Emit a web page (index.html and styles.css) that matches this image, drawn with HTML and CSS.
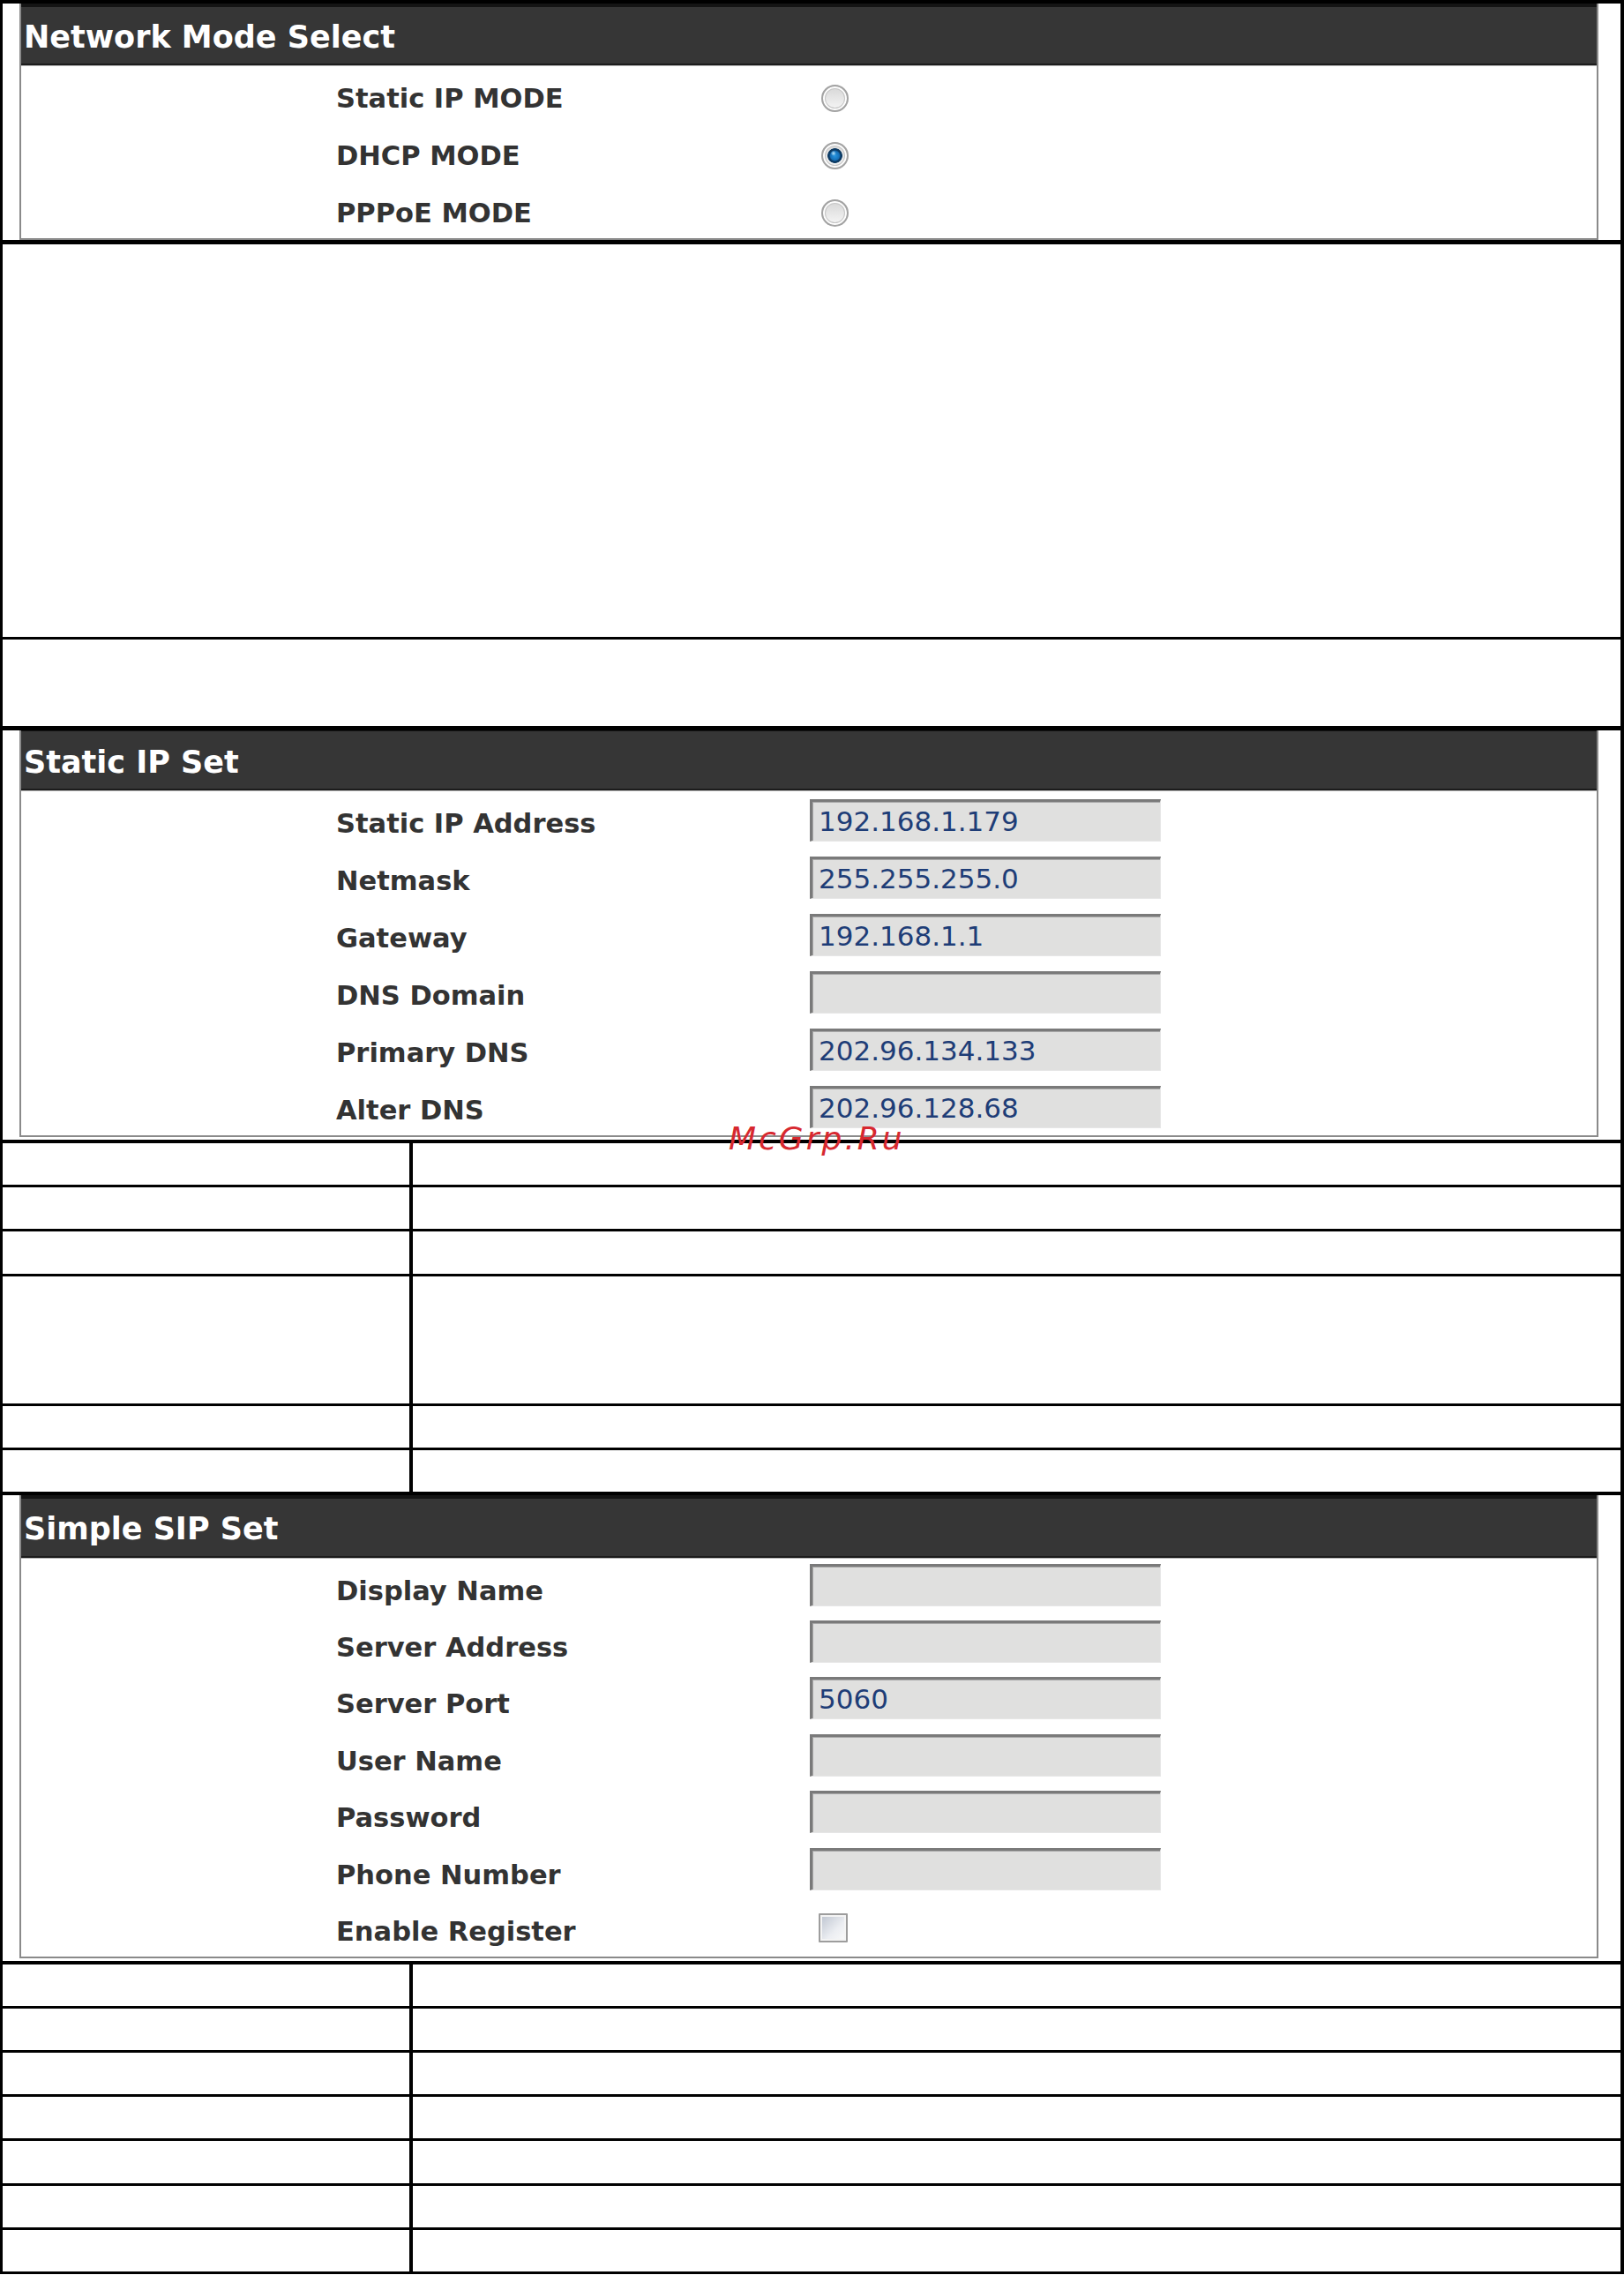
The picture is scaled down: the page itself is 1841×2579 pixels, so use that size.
FILE: index.html
```html
<!DOCTYPE html>
<html lang="en">

<head>
    <meta charset="UTF-8">
    <title>Network Settings</title>
    <link rel="stylesheet" href="styles.css">
</head>

<body>
    <div class="doc">
        <!-- network mode screenshot -->
        <div class="cell cell-mode">
            <div class="panel">
                <div class="panel-head head-thick">Network Mode Select</div>
                <div class="panel-body">
                    <div class="row">
                        <label class="label" for="modeStatic">Static IP MODE</label>
                        <input type="radio" class="radio" name="mode" id="modeStatic">
                    </div>
                    <div class="row">
                        <label class="label" for="modeDhcp">DHCP MODE</label>
                        <input type="radio" class="radio" name="mode" id="modeDhcp" checked>
                    </div>
                    <div class="row">
                        <label class="label" for="modePppoe">PPPoE MODE</label>
                        <input type="radio" class="radio" name="mode" id="modePppoe">
                    </div>
                </div>
            </div>
        </div>
        <div class="cell gap-big"></div>
        <div class="cell gap-small"></div>

        <!-- static ip screenshot -->
        <div class="cell cell-static">
            <div class="panel">
                <div class="panel-head head-thin">Static IP Set</div>
                <div class="panel-body">
                    <div class="row">
                        <label class="label">Static IP Address</label>
                        <input type="text" class="field" value="192.168.1.179">
                    </div>
                    <div class="row">
                        <label class="label">Netmask</label>
                        <input type="text" class="field" value="255.255.255.0">
                    </div>
                    <div class="row">
                        <label class="label">Gateway</label>
                        <input type="text" class="field" value="192.168.1.1">
                    </div>
                    <div class="row">
                        <label class="label">DNS Domain</label>
                        <input type="text" class="field" value="">
                    </div>
                    <div class="row">
                        <label class="label">Primary DNS</label>
                        <input type="text" class="field" value="202.96.134.133">
                    </div>
                    <div class="row">
                        <label class="label">Alter DNS</label>
                        <input type="text" class="field" value="202.96.128.68">
                    </div>
                </div>
            </div>
        </div>

        <div class="split">
            <div class="split-row"><div class="key"></div><div class="desc"></div></div>
            <div class="split-row"><div class="key"></div><div class="desc"></div></div>
            <div class="split-row"><div class="key"></div><div class="desc"></div></div>
            <div class="split-row tall"><div class="key"></div><div class="desc"></div></div>
            <div class="split-row"><div class="key"></div><div class="desc"></div></div>
            <div class="split-row end"><div class="key"></div><div class="desc"></div></div>
        </div>

        <!-- sip screenshot -->
        <div class="cell cell-sip">
            <div class="panel sip">
                <div class="panel-head head-thick">Simple SIP Set</div>
                <div class="panel-body">
                    <div class="row">
                        <label class="label">Display Name</label>
                        <input type="text" class="field" value="">
                    </div>
                    <div class="row">
                        <label class="label">Server Address</label>
                        <input type="text" class="field" value="">
                    </div>
                    <div class="row">
                        <label class="label">Server Port</label>
                        <input type="text" class="field" value="5060">
                    </div>
                    <div class="row">
                        <label class="label">User Name</label>
                        <input type="text" class="field" value="">
                    </div>
                    <div class="row">
                        <label class="label">Password</label>
                        <input type="password" class="field" value="">
                    </div>
                    <div class="row">
                        <label class="label">Phone Number</label>
                        <input type="text" class="field" value="">
                    </div>
                    <div class="row">
                        <label class="label" for="enableReg">Enable Register</label>
                        <input type="checkbox" class="check" id="enableReg">
                    </div>
                </div>
            </div>
        </div>

        <div class="split">
            <div class="split-row"><div class="key"></div><div class="desc"></div></div>
            <div class="split-row"><div class="key"></div><div class="desc"></div></div>
            <div class="split-row"><div class="key"></div><div class="desc"></div></div>
            <div class="split-row"><div class="key"></div><div class="desc"></div></div>
            <div class="split-row"><div class="key"></div><div class="desc"></div></div>
            <div class="split-row"><div class="key"></div><div class="desc"></div></div>
            <div class="split-row"><div class="key"></div><div class="desc"></div></div>
        </div>
    </div>

    <div class="watermark">McGrp.Ru</div>
</body>

</html>
```

FILE: styles.css
```css
body {
    margin: 0;
    background-color: #fff;
    font-family: "DejaVu Sans", Verdana, sans-serif;
}

.doc {
    border-style: solid;
    border-color: #000;
    border-width: 4px 4px 0 3px;
}

.cell {
    border-bottom: 3px solid #000;
}

.cell-mode {
    padding: 0 25px 0 19px;
    border-bottom-width: 5px;
}

.gap-big {
    height: 445px;
}

.gap-small {
    height: 98px;
    border-bottom-width: 5px;
}

.cell-static {
    padding: 0 25px 3px 19px;
    border-bottom-width: 4px;
}

.cell-sip {
    padding: 0 25px 3px 19px;
    border-bottom-width: 4px;
}

/* the grey framed form panels */
.panel {
    border-style: solid;
    border-color: #8a8a8a;
    border-width: 0 2px 2px 2px;
}

.panel-head {
    box-sizing: border-box;
    display: flex;
    align-items: center;
    padding: 4px 0 0 3px;
    background-color: #363636;
    color: #fff;
    font-size: 35px;
    font-weight: bold;
    border-bottom: 2px solid #1c1c1c;
}

.head-thick {
    height: 70px;
    border-top: 4px solid #141414;
}

.sip .head-thick {
    height: 71px;
}

.head-thin {
    height: 68px;
    border-top: 1px solid #141414;
}

.panel-body {
    border-top: 1px solid #b8b8b8;
}

.row {
    display: grid;
    grid-template-columns: 536px 1fr;
    align-items: center;
    height: 65px;
    padding-left: 357px;
}

.sip .row {
    height: 64.4px;
}

.label {
    padding-top: 8px;
    font-size: 30.5px;
    font-weight: bold;
    color: #333;
}

.field {
    box-sizing: border-box;
    width: 398px;
    height: 48px;
    margin: 0 0 0 1px;
    padding: 0 0 0 7px;
    border-style: solid;
    border-width: 3px 1px 1px 3px;
    border-color: #7a7a7a #e6e6e6 #e6e6e6 #7a7a7a;
    box-shadow: inset 1px 1px 0 #a8a8a8;
    background-color: #e0e0df;
    font-family: "DejaVu Sans", Verdana, sans-serif;
    font-size: 31px;
    color: #1e3d77;
    outline: none;
}

.sip .field {
    margin-bottom: 5px;
}

.radio {
    -webkit-appearance: none;
    appearance: none;
    box-sizing: border-box;
    width: 31px;
    height: 31px;
    margin: 7px 0 0 14px;
    border: 2px solid #a3a3a3;
    border-radius: 50%;
    background: linear-gradient(#d6d6d6, #f7f7f7);
    box-shadow: inset 0 0 0 2px #fdfdfd, inset 0 0 0 3px #c6c6c6;
}

.radio:checked {
    background:
        radial-gradient(circle at 44% 40%, rgba(200, 238, 255, 0.95) 0, rgba(200, 238, 255, 0) 3px),
        radial-gradient(circle, #2896e0 0, #1670b8 5px, #0c3a63 6.5px, #0c3a63 8px, rgba(12, 58, 99, 0) 8.7px),
        linear-gradient(#d6d6d6, #f7f7f7);
}

.check {
    -webkit-appearance: none;
    appearance: none;
    box-sizing: border-box;
    width: 33px;
    height: 33px;
    margin: 0 0 0 11px;
    border: 2px solid #9d9d9d;
    border-radius: 1px;
    background: linear-gradient(135deg, #bcc3cf, #eceef2 60%, #fafafa);
    box-shadow: inset 0 0 0 2px #f4f4f4;
}

/* empty two column tables between the panels */
.split-row {
    display: grid;
    grid-template-columns: 465px 1fr;
    height: 47.2px;
    border-bottom: 3px solid #000;
}

.split-row.tall {
    height: 144px;
}

.split-row.end {
    border-bottom-width: 4px;
}

.key {
    border-right: 4px solid #000;
}

.watermark {
    position: absolute;
    left: 826px;
    top: 1270px;
    font-family: "DejaVu Sans", sans-serif;
    font-style: oblique;
    font-size: 36px;
    letter-spacing: 3px;
    color: #d7282f;
}
```
